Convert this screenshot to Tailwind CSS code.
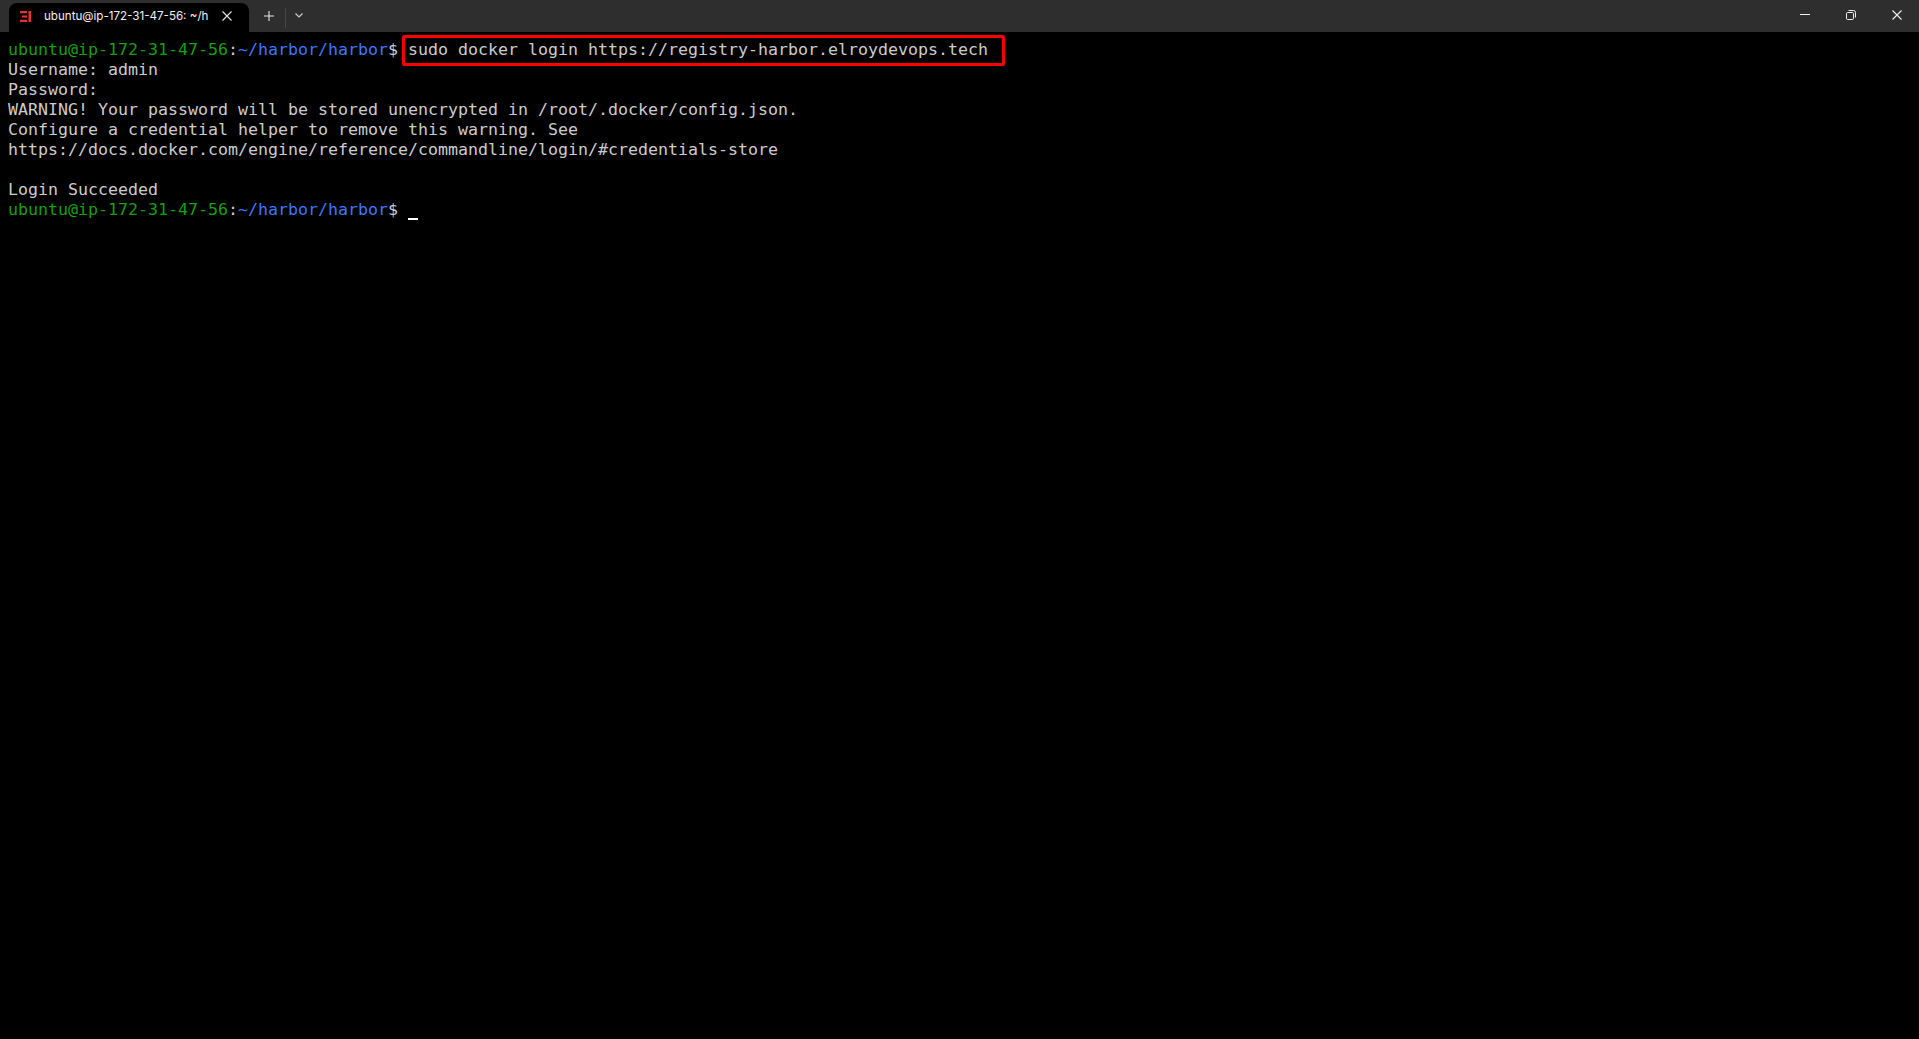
<!DOCTYPE html>
<html lang="en">
<head>
    <meta charset="UTF-8">
    <title>ubuntu@ip-172-31-47-56: ~/harbor/harbor</title>
    <script src="https://cdn.jsdelivr.net/npm/@tailwindcss/browser@4"></script>
</head>
<body class="bg-black h-[1039px] overflow-hidden">
    <!-- Title bar -->
    <header class="h-8 bg-[#2e2e2e] flex items-end font-['Inter','Noto_Sans',sans-serif]">
        <div class="ml-[9px] w-[240px] h-[29px] bg-black rounded-t-lg flex items-center">
            <svg class="ml-[11px] -mt-[3px]" width="11" height="11" viewBox="0 0 11 11">
                <path d="M0 0H7V2.2H0ZM2 4.4H7V6.6H2ZM0 8.8H7V11H0ZM8.5 0H11V11H8.5Z" fill="#e8322a"/>
            </svg>
            <span class="ml-[13px] w-[164px] -mt-[1px] overflow-hidden whitespace-nowrap text-[11.6px] text-[#f2f2f2]">ubuntu@ip-172-31-47-56: ~/harbor/harbor</span>
            <svg class="ml-[14px] -mt-[4px]" width="10" height="10" viewBox="0 0 10 10" stroke="#e6e6e6" stroke-width="1.1" fill="none">
                <path d="M0.5 0.5L9.5 9.5M9.5 0.5L0.5 9.5"/>
            </svg>
        </div>
        <div class="h-[29px] flex items-center">
            <svg class="ml-[15px] -mt-[4px]" width="10" height="10" viewBox="0 0 10 10" stroke="#e6e6e6" stroke-width="1.1" fill="none">
                <path d="M5 0V10M0 5H10"/>
            </svg>
            <div class="ml-[11px] w-px h-5 bg-[#474747]"></div>
            <svg class="ml-[9px] -mt-[4px]" width="8" height="5" viewBox="0 0 8 5" stroke="#d0d0d0" stroke-width="1.1" fill="none">
                <path d="M0.5 0.5L4 4L7.5 0.5"/>
            </svg>
        </div>
        <div class="ml-auto h-[30px] flex items-center self-start">
            <svg width="10" height="2" viewBox="0 0 10 2" fill="#f0f0f0"><rect width="10" height="1"/></svg>
            <svg class="ml-[36px]" width="10" height="10" viewBox="0 0 10 10" stroke="#f0f0f0" stroke-width="1" fill="none">
                <rect x="0.5" y="2.5" width="7" height="7" rx="1.2"/>
                <path d="M2.5 0.5H7.5A2 2 0 0 1 9.5 2.5V7.5"/>
            </svg>
            <svg class="ml-[36px] mr-[17px]" width="10" height="10" viewBox="0 0 10 10" stroke="#f0f0f0" stroke-width="1.1" fill="none">
                <path d="M0.5 0.5L9.5 9.5M9.5 0.5L0.5 9.5"/>
            </svg>
        </div>
    </header>

    <!-- Terminal -->
    <main class="relative pt-2 pl-2 font-['DejaVu_Sans_Mono',monospace] text-[16.62px] leading-5 text-[#cccccc] whitespace-nowrap">
        <div><span class="text-[#13a10e]">ubuntu@ip-172-31-47-56</span>:<span class="text-[#3b78ff]">~/harbor/harbor</span>$ sudo docker login https://registry-harbor.elroydevops.tech</div>
        <div>Username: admin</div>
        <div>Password:</div>
        <div>WARNING! Your password will be stored unencrypted in /root/.docker/config.json.</div>
        <div>Configure a credential helper to remove this warning. See</div>
        <div>https://docs.docker.com/engine/reference/commandline/login/#credentials-store</div>
        <div class="h-5"></div>
        <div>Login Succeeded</div>
        <div class="flex"><span class="whitespace-pre"><span class="text-[#13a10e]">ubuntu@ip-172-31-47-56</span>:<span class="text-[#3b78ff]">~/harbor/harbor</span>$ </span><span class="w-[10px] h-5 relative"><span class="absolute left-0 right-0 bottom-0 h-[2px] bg-white"></span></span></div>

        <!-- Red annotation round the command -->
        <div class="absolute left-[402px] top-[3px] w-[603px] h-[31px] border-[3px] border-[#ff0000] rounded-[2px]"></div>
    </main>
</body>
</html>
